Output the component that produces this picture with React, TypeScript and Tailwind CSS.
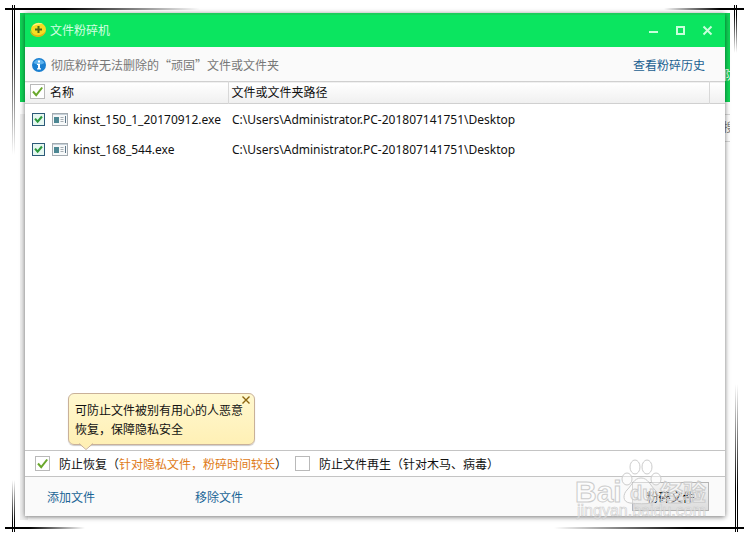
import type { ReactNode } from 'react'

const files = [
  { name: 'kinst_150_1_20170912.exe', path: 'C:\\Users\\Administrator.PC-201807141751\\Desktop' },
  { name: 'kinst_168_544.exe', path: 'C:\\Users\\Administrator.PC-201807141751\\Desktop' },
]

function Check({ id, label, checked, small }: { id: string; label?: string; checked?: boolean; small?: boolean }) {
  return (
    <span className={`relative inline-flex shrink-0 ${small ? 'h-[13px] w-[13px]' : 'h-[15px] w-[15px]'}`}>
      <input
        id={id}
        type="checkbox"
        aria-label={label}
        defaultChecked={checked}
        className={`peer h-full w-full appearance-none border ${small ? 'border-[#2c5a78] bg-[#e6f7f1]' : 'border-[#b9b9b9] bg-white'}`}
      />
      <svg
        viewBox="0 0 15 15"
        fill="none"
        stroke={small ? '#2c9a3c' : '#6aa82c'}
        strokeWidth={small ? 2.4 : 2}
        className="pointer-events-none absolute inset-0 h-full w-full opacity-0 peer-checked:opacity-100"
      >
        <path d={small ? 'M3.5 6.5l3 3.5 5-6' : 'M3 7.5l3.2 3.7 6-7.7'} />
      </svg>
    </span>
  )
}

function Logo() {
  return (
    <svg viewBox="0 0 18 18" className="h-[18px] w-[18px] shrink-0" aria-hidden="true">
      <ellipse cx="9.5" cy="8.5" rx="7.5" ry="6.8" fill="#f6dc22" />
      <path d="M3 5.500A8 7 0 0 1 14 3Q8 2.500 3 5.500z" fill="#fff58a" />
      <path d="M1 9c0 5 5 7.500 9 7 4-.5 6-3 7-6-3 3.500-6 4.500-9 4.200C5 14 2.500 12 1 9z" fill="#e0b414" />
      <path d="M9.500 5v7M6 8.500h7" stroke="#4a6b12" strokeWidth="2" />
    </svg>
  )
}

function InfoIcon() {
  return (
    <svg viewBox="0 0 14 14" className="h-[14px] w-[14px] shrink-0" aria-hidden="true">
      <circle cx="7" cy="7" r="7" fill="#1a7fd0" />
      <path d="M1.500 5a6 6 0 0 1 11 0Q7 8 1.500 5z" fill="#5cb2ee" />
      <path d="M6 2.500h2v2H6zM5 5.800h3v4.400h1v1.300H5v-1.300h1V7.100H5z" fill="#fff" />
    </svg>
  )
}

function ExeIcon() {
  return (
    <svg viewBox="0 0 16 13" className="h-[13px] w-[16px] shrink-0" aria-hidden="true">
      <rect x=".5" y=".5" width="15" height="12" fill="#f6f8f9" stroke="#a3abb1" />
      <path d="M1 1.500h14" stroke="#c5d0d8" />
      <rect x="2" y="4" width="5" height="6" fill="#4c8793" />
      <path d="M8.500 4.500h3M8.500 6.500h3M8.500 8.500h3" stroke="#a5adb2" />
      <path d="M13.500 3v7" stroke="#5d7688" />
    </svg>
  )
}

function WindowButton({ label, children }: { label: string; children: ReactNode }) {
  return (
    <button type="button" aria-label={label} className="flex h-5 w-[27px] items-center justify-center">
      <svg viewBox="0 0 11 11" className="h-[11px] w-[11px]" fill="none" stroke="#c8ffdb" strokeWidth="2">
        {children}
      </svg>
    </button>
  )
}

// Crossed ink strokes in the corners of the page
function CornerLines() {
  return (
    <div className="pointer-events-none absolute inset-0" aria-hidden="true">
      <div className="absolute left-[5px] top-2 h-[2px] w-[195px] bg-linear-to-r from-black from-30% to-transparent" />
      <div className="absolute left-3 top-[5px] h-[150px] w-[3px] border-x border-black mask-b-from-20% mask-b-to-100%" />
      <div className="absolute right-[5px] top-2 h-[2px] w-[80px] bg-linear-to-l from-black from-30% to-transparent" />
      <div className="absolute right-3 top-[5px] h-[48px] w-[3px] border-x border-black mask-b-from-20% mask-b-to-100%" />
      <div className="absolute bottom-2 left-[5px] h-[2px] w-[80px] bg-linear-to-r from-black from-30% to-transparent" />
      <div className="absolute bottom-[5px] left-3 h-[52px] w-[3px] border-x border-black mask-t-from-20% mask-t-to-100%" />
      <div className="absolute bottom-2 right-[5px] h-[2px] w-[190px] bg-linear-to-l from-black from-30% to-transparent" />
      <div className="absolute bottom-[5px] right-[11px] h-[148px] w-[3px] border-x border-black mask-t-from-30% mask-t-to-100%" />
    </div>
  )
}

// The main program window, of which only the edges stay visible
function BackWindow() {
  return (
    <div className="absolute top-[13px] right-[19px] bottom-[17px] left-5 overflow-hidden" aria-hidden="true">
      <div className="h-[89px] bg-[#0fd456]" />
      <div className="h-full border-l-8 border-[#f0f0f0] bg-white">
        <div className="mt-3 h-[28px] border-y border-[#d8d8d8]" />
      </div>
      <span className="absolute right-[-6px] top-[54px] text-xs text-white">防</span>
      <span className="absolute right-[-5px] top-[106px] text-xs text-[#777]">搜</span>
    </div>
  )
}

function Watermark() {
  return (
    <svg
      viewBox="0 0 140 66"
      className="pointer-events-none absolute right-[11px] bottom-[-6px] h-[66px] w-[140px] font-['Liberation_Sans','Noto_Sans_CJK_SC',sans-serif]"
      fill="#ffffff"
      fillOpacity=".45"
      stroke="#cccccc"
      aria-hidden="true"
    >
      <ellipse cx="53" cy="23" rx="5" ry="6" />
      <ellipse cx="61" cy="11" rx="5" ry="7" />
      <ellipse cx="73" cy="11" rx="5" ry="7" />
      <ellipse cx="82" cy="23" rx="5" ry="6" />
      <path d="M67 22c7 0 9 7 14 12 4 4 4 12-3 13-6 1-15 1-22 0-8-1-7-9-3-13 5-5 7-12 14-12z" />
      <text x="1" y="46" fontSize="30" fontWeight="bold">Bai</text>
      <text x="56" y="44" fontSize="20" fontWeight="bold">du</text>
      <text x="86" y="45" fontSize="23" fontWeight="bold">经验</text>
      <text x="3" y="60" fontSize="16" strokeWidth=".6">jingyan.baidu.com</text>
    </svg>
  )
}

export default function App() {
  return (
    <div
      lang="zh-CN"
      className="relative flex min-h-screen flex-col bg-white pt-[13px] pr-6 pb-[21px] pl-[25px] font-['Noto_Sans_CJK_SC',sans-serif] text-xs text-[#111]"
    >
      <BackWindow />
      <CornerLines />

      <main className="relative flex flex-1 flex-col bg-white shadow-[0_1px_5px_rgba(0,0,0,0.55)]">
        <header className="flex h-[34px] items-center border-t-2 border-[#19cf5a] bg-[#0be560] px-1 pb-[2px]">
          <Logo />
          <h1 className="ml-[3px] flex-1 text-[#d4ffe2]">文件粉碎机</h1>
          <WindowButton label="最小化">
            <path d="M1 7h9" />
          </WindowButton>
          <WindowButton label="最大化">
            <path d="M2 2h7v7H2z" />
          </WindowButton>
          <WindowButton label="关闭">
            <path d="M1.500 1.500l8 8M9.500 1.500l-8 8" />
          </WindowButton>
        </header>

        <div className="flex h-[34px] items-center bg-[#fafafa] pt-[2px] pr-5 pl-[7px] text-[#777]">
          <InfoIcon />
          <p className="ml-[5px] flex-1">彻底粉碎无法删除的“顽固”文件或文件夹</p>
          <a href="#history" className="text-[#1b5f91]">查看粉碎历史</a>
        </div>

        <div className="flex-1">
          <table className="w-full table-fixed border-collapse text-left">
            <thead>
              <tr className="h-[22px] border-y border-[#d0d0d0] bg-linear-to-b from-white to-[#f0f0f0]">
                <th className="w-[203px] border-r border-[#d8d8d8] pt-0 pb-[2px] pl-[5px] font-normal">
                  <span className="flex items-center gap-[5px]">
                    <Check id="all" label="全选" checked />
                    名称
                  </span>
                </th>
                <th className="border-r border-[#d8d8d8] pt-0 pb-[2px] pl-[3px] font-normal">文件或文件夹路径</th>
                <th className="w-4 p-0" />
              </tr>
            </thead>
            <tbody className="font-['Noto_Sans',sans-serif]">
              {files.map((file, i) => (
                <tr key={file.name} className="h-[30px]">
                  <td className="pt-[2px] pb-0 pl-[7px]">
                    <span className="flex items-center whitespace-nowrap">
                      <Check id={`file-${i}`} checked small />
                      <label htmlFor={`file-${i}`} className="ml-[7px] flex items-center gap-[5px]">
                        <ExeIcon />
                        {file.name}
                      </label>
                    </span>
                  </td>
                  <td className="pt-[2px] pb-0 pl-1">{file.path}</td>
                  <td />
                </tr>
              ))}
            </tbody>
          </table>
        </div>

        <div className="relative flex h-[27px] items-center border-y border-[#c4c4c4] pl-[10px]">
          <Check id="recover" checked />
          <label htmlFor="recover" className="ml-[9px]">
            防止恢复（<span className="text-[#e07b18]">针对隐私文件，粉碎时间较长</span>）
          </label>
          <span className="ml-[8px] flex items-center gap-[9px]">
            <Check id="regen" />
            <label htmlFor="regen">防止文件再生（针对木马、病毒）</label>
          </span>

          <div
            role="tooltip"
            className="absolute bottom-[31px] left-[43px] w-[187px] rounded-md border border-[#c9b199] bg-linear-to-b from-[#fff8cf] to-[#fff0b5] py-[6px] pl-[6px] leading-[19px] shadow-[0_1px_1px_rgba(0,0,0,0.2)]"
          >
            可防止文件被别有用心的人恶意
            <br />
            恢复，保障隐私安全
            <button type="button" aria-label="关闭提示" className="absolute top-[2px] right-1">
              <svg viewBox="0 0 8 8" className="h-2 w-2" stroke="#8a6410" strokeWidth="1.400">
                <path d="M.5.5l7 7M7.500.5l-7 7" />
              </svg>
            </button>
            <svg viewBox="0 0 14 7" className="absolute -bottom-[6px] left-[10px] h-[7px] w-[14px]" aria-hidden="true">
              <path d="M0 0h14L7 6z" fill="#fff0b5" />
              <path d="M0 .5l7 6 7-6" fill="none" stroke="#c9b199" />
            </svg>
          </div>
        </div>

        <footer className="relative flex h-[39px] items-center bg-[#fafafa] pr-4 pl-[22px] text-[#1b6596]">
          <button type="button" className="w-[148px] text-left">添加文件</button>
          <button type="button">移除文件</button>
          <button
            type="button"
            className="ml-auto h-[29px] w-[77px] border border-[#b4b4b4] bg-linear-to-b from-[#f4f4f4] to-[#dcdcdc] text-black"
          >
            粉碎文件
          </button>
          <Watermark />
        </footer>
      </main>
    </div>
  )
}
